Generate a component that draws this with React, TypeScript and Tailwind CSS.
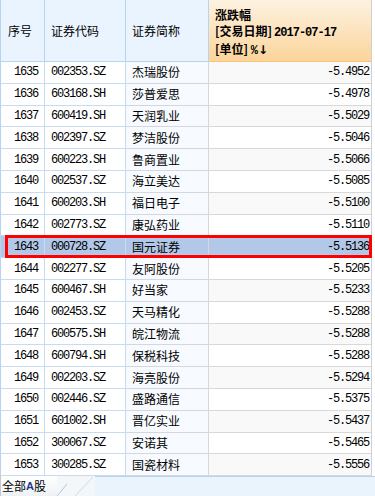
const rows = [
  ["1635", "002353.SZ", "杰瑞股份", "-5.4952"],
  ["1636", "603168.SH", "莎普爱思", "-5.4978"],
  ["1637", "600419.SH", "天润乳业", "-5.5029"],
  ["1638", "002397.SZ", "梦洁股份", "-5.5046"],
  ["1639", "600223.SH", "鲁商置业", "-5.5066"],
  ["1640", "002537.SZ", "海立美达", "-5.5085"],
  ["1641", "600203.SH", "福日电子", "-5.5100"],
  ["1642", "002773.SZ", "康弘药业", "-5.5110"],
  ["1643", "000728.SZ", "国元证券", "-5.5136"],
  ["1644", "002277.SZ", "友阿股份", "-5.5205"],
  ["1645", "600467.SH", "好当家", "-5.5233"],
  ["1646", "002453.SZ", "天马精化", "-5.5288"],
  ["1647", "600575.SH", "皖江物流", "-5.5288"],
  ["1648", "600794.SH", "保税科技", "-5.5288"],
  ["1649", "002203.SZ", "海亮股份", "-5.5294"],
  ["1650", "002446.SZ", "盛路通信", "-5.5375"],
  ["1651", "601002.SH", "晋亿实业", "-5.5437"],
  ["1652", "300067.SZ", "安诺其", "-5.5465"],
  ["1653", "300285.SZ", "国瓷材料", "-5.5556"],
];

const mono = "font-['Liberation_Mono',monospace] text-[12px] tracking-[-1.2px]";
const cjk = "font-['Noto_Sans_CJK_SC',sans-serif] text-[12px]";

export default function App() {
  return (
    <div className="w-[375px] h-[496px] bg-white flex flex-col overflow-hidden text-black">
      <div className="flex">
        <div className="w-[371px] border-l border-[#b7d3f0]">
          {/* Header */}
          <div className="grid grid-cols-[44px_81px_83px_162px] h-[62px]">
            <div className={`bg-[#eaf4fe] border-r border-b border-[#b7d3f0] flex items-center pl-[7px] ${cjk}`}>序号</div>
            <div className={`bg-[#eaf4fe] border-r border-b border-[#b7d3f0] flex items-center pl-[6px] ${cjk}`}>证券代码</div>
            <div className={`bg-[#eaf4fe] border-r border-b border-[#b7d3f0] flex items-center pl-[6px] ${cjk}`}>证券简称</div>
            <div className="bg-gradient-to-b from-[#fdf2e0] to-[#fbd49a] border-b border-[#f6c27c] pl-[6px] pt-[7px] font-['Noto_Sans_CJK_SC',sans-serif] font-bold text-[12px] leading-[16px]">
              <div>涨跌幅</div>
              <div className="whitespace-nowrap">
                [交易日期]<span className="font-['Liberation_Mono',monospace] tracking-[-1px] ml-[2px]">2017-07-17</span>
              </div>
              <div className="whitespace-nowrap">
                [单位] <span className="font-['Liberation_Mono',monospace]">%</span>
                <span className="font-['DejaVu_Sans',sans-serif]">↓</span>
              </div>
            </div>
          </div>
          {/* Rows */}
          <div className="flex flex-col h-[414px]">
            {rows.map((r, i) => {
              const sel = r[0] === "1643";
              const bg = sel ? "bg-[#b2c8e8]" : i % 2 === 0 ? "bg-[#f9f9f9]" : "bg-white";
              const left = sel ? "bg-[#b2c8e8]" : "bg-white";
              return (
                <div key={r[0]} className="relative flex-1 grid grid-cols-[44px_81px_83px_162px]">
                  <div className={`${left} border-r border-b border-[#c9dbee] flex items-center justify-end pr-[6px] ${mono}`}>{r[0]}</div>
                  <div className={`${left} border-r border-b border-[#c9dbee] flex items-center pl-[6px] ${mono}`}>{r[1]}</div>
                  <div className={`${sel ? "bg-[#b2c8e8]" : "bg-[#f7fafe]"} border-r border-b border-[#d4d8dc] flex items-center pl-[6px] ${cjk}`}>{r[2]}</div>
                  <div className={`${bg} border-b border-[#d8d8d8] flex items-center justify-end pr-[2px] ${mono}`}>{r[3]}</div>
                  {sel && (
                    <div className="absolute left-[4px] -right-[1px] -top-[1px] bottom-0 border-[3px] border-[#ff0000]" />
                  )}
                </div>
              );
            })}
          </div>
        </div>
        <div className="flex-1 border-l border-[#d0d0d0] bg-white" />
      </div>
      {/* Bottom tabs */}
      <div className="h-[20px] flex">
        <div className="w-[57px] bg-gradient-to-b from-white to-[#eef1f4] border-l border-[#c8c8c8] flex items-center pl-[1px] font-['Noto_Sans_CJK_SC',sans-serif] text-[12px]">
          全部<span className="font-['Liberation_Sans',sans-serif] font-bold text-[#1a3a8a] text-[11px]">A</span>股
        </div>
        <svg width="38" height="20" className="shrink-0 bg-[#f4f7fa]">
          <line x1="0" y1="20" x2="10" y2="8" stroke="#b0c4d8" strokeWidth="1" />
          <line x1="18" y1="20" x2="36" y2="1" stroke="#c9d8e6" strokeWidth="1" />
        </svg>
        <div className="flex-1 bg-[#eaf4fd] border-t border-[#b7d3f0]" />
      </div>
    </div>
  );
}
